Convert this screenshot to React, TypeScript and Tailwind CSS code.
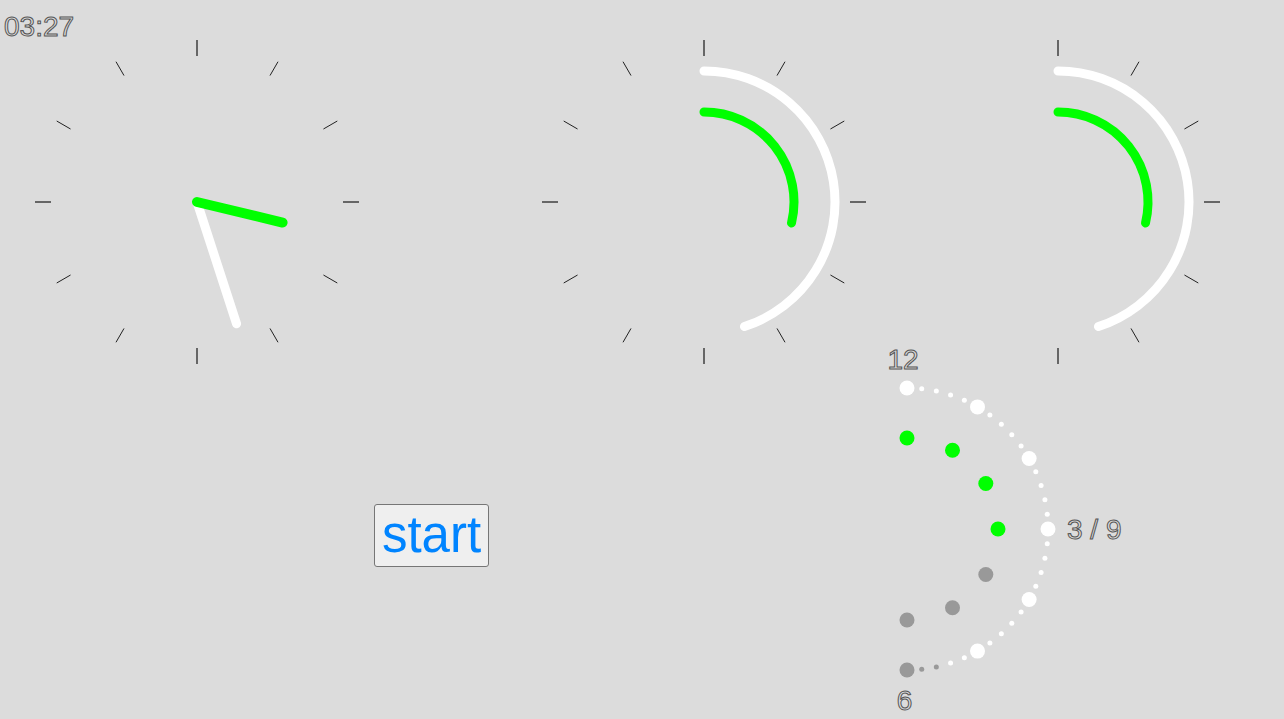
import React from "react";

const CX = 165;
const CY = 166;

function pt(cx: number, cy: number, r: number, deg: number) {
  const a = (deg * Math.PI) / 180;
  return { x: cx + r * Math.sin(a), y: cy - r * Math.cos(a) };
}

function Ticks({ half }: { half?: boolean }) {
  const items = [];
  const n = half ? 7 : 12;
  for (let i = 0; i < n; i++) {
    const deg = i * 30;
    const a = pt(CX, CY, 146, deg);
    const b = pt(CX, CY, 162, deg);
    const major = i % 3 === 0;
    items.push(
      <line
        key={i}
        x1={a.x}
        y1={a.y}
        x2={b.x}
        y2={b.y}
        stroke={major ? "#666" : "#222"}
        strokeWidth={major ? 2 : 1}
      />
    );
  }
  return <>{items}</>;
}

function arc(r: number, deg: number) {
  const s = pt(CX, CY, r, 0);
  const e = pt(CX, CY, r, deg);
  const large = deg > 180 ? 1 : 0;
  return `M ${s.x} ${s.y} A ${r} ${r} 0 ${large} 1 ${e.x} ${e.y}`;
}

const HOUR_DEG = (3 + 27 / 60) * 30;
const MIN_DEG = 27 * 6;

function HandClock() {
  const h = pt(CX, CY, 88, HOUR_DEG);
  const m = pt(CX, CY, 128, MIN_DEG);
  return (
    <svg width={330} height={330} className="block ml-[32px]">
      <Ticks />
      <line x1={CX} y1={CY} x2={m.x} y2={m.y} stroke="#fff" strokeWidth={9} strokeLinecap="round" />
      <line x1={CX} y1={CY} x2={h.x} y2={h.y} stroke="#00ff00" strokeWidth={10} strokeLinecap="round" />
    </svg>
  );
}

function ArcClock({ half, className }: { half?: boolean; className?: string }) {
  return (
    <svg width={330} height={half ? 300 : 330} className={className} overflow="visible">
      <Ticks half={half} />
      <path d={arc(131, MIN_DEG)} fill="none" stroke="#fff" strokeWidth={9} strokeLinecap="round" />
      <path d={arc(90, HOUR_DEG)} fill="none" stroke="#00ff00" strokeWidth={9} strokeLinecap="round" />
    </svg>
  );
}

function DotClock() {
  const dcx = 27;
  const dcy = 193;
  const minutes = [];
  for (let i = 0; i <= 30; i++) {
    const p = pt(dcx, dcy, 141, i * 6);
    const big = i % 5 === 0;
    minutes.push(
      <circle key={"m" + i} cx={p.x} cy={p.y} r={big ? 7.5 : 2.5} fill={i <= 27 ? "#fff" : "#999"} />
    );
  }
  const hours = [];
  for (let i = 0; i <= 6; i++) {
    const p = pt(dcx, dcy, 91, i * 30);
    hours.push(<circle key={"h" + i} cx={p.x} cy={p.y} r={7.5} fill={i <= 3 ? "#00ff00" : "#999"} />);
  }
  const txt = {
    fontFamily: "'Liberation Sans', Arial, sans-serif",
    fontSize: 28,
    fill: "none",
    stroke: "#555",
    strokeWidth: 1,
  } as const;
  return (
    <svg width={260} height={383} className="block">
      {minutes}
      {hours}
      <text x={23} y={33} textAnchor="middle" {...txt}>12</text>
      <text x={24.5} y={374} textAnchor="middle" {...txt}>6</text>
      <text x={187} y={202.5} {...txt}>3 / 9</text>
    </svg>
  );
}

export default function App() {
  return (
    <div className="w-[1284px] h-[719px] bg-[#dcdcdc] overflow-hidden flex font-['Liberation_Sans',Arial,sans-serif]">
      <div className="w-[539px] shrink-0 flex flex-col">
        <div className="h-[36px] pl-[4px] pt-[11px] text-[28px] leading-[32px] text-transparent [-webkit-text-stroke:1px_#555]">
          03:27
        </div>
        <HandClock />
        <button className="ml-[374px] mt-[138px] w-[115px] h-[63px] pb-[2px] flex items-center justify-center bg-[#efefef] border border-[#767676] rounded-[3px] text-[51px] leading-[57px] text-[#0084ff]">
          start
        </button>
      </div>
      <div className="w-[341px] shrink-0 pt-[36px]">
        <ArcClock className="block" />
      </div>
      <div className="flex flex-col pt-[36px]">
        <ArcClock half className="block ml-[13px]" />
        <DotClock />
      </div>
    </div>
  );
}
